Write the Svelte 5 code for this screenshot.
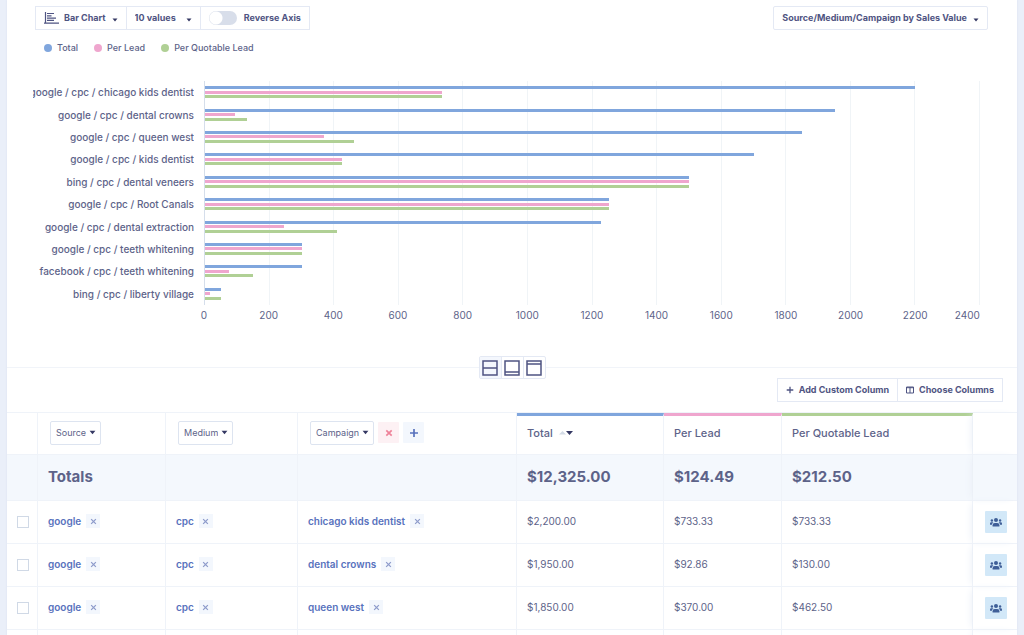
<script lang="ts">
	interface ReportRow {
		source: string;
		medium: string;
		campaign: string;
		total: number;
		perLead: number;
		perQuotable: number;
	}

	const AXIS_MAX = 2400;
	const ticks = Array.from({ length: 13 }, (_, i) => i * 200);
	const dimensions = ['Source', 'Medium', 'Campaign'];

	const series = [
		{ key: 'total', label: 'Total' },
		{ key: 'perLead', label: 'Per Lead' },
		{ key: 'perQuotable', label: 'Per Quotable Lead' }
	] as const;

	const rows: ReportRow[] = [
		{ source: 'google', medium: 'cpc', campaign: 'chicago kids dentist', total: 2200, perLead: 733.33, perQuotable: 733.33 },
		{ source: 'google', medium: 'cpc', campaign: 'dental crowns', total: 1950, perLead: 92.86, perQuotable: 130 },
		{ source: 'google', medium: 'cpc', campaign: 'queen west', total: 1850, perLead: 370, perQuotable: 462.5 },
		{ source: 'google', medium: 'cpc', campaign: 'kids dentist', total: 1700, perLead: 425, perQuotable: 425 },
		{ source: 'bing', medium: 'cpc', campaign: 'dental veneers', total: 1500, perLead: 1500, perQuotable: 1500 },
		{ source: 'google', medium: 'cpc', campaign: 'Root Canals', total: 1250, perLead: 1250, perQuotable: 1250 },
		{ source: 'google', medium: 'cpc', campaign: 'dental extraction', total: 1225, perLead: 245, perQuotable: 408.33 },
		{ source: 'google', medium: 'cpc', campaign: 'teeth whitening', total: 300, perLead: 300, perQuotable: 300 },
		{ source: 'facebook', medium: 'cpc', campaign: 'teeth whitening', total: 300, perLead: 75, perQuotable: 150 },
		{ source: 'bing', medium: 'cpc', campaign: 'liberty village', total: 50, perLead: 16.67, perQuotable: 50 }
	];

	const totals = { total: 12325, perLead: 124.49, perQuotable: 212.5 };

	let reverseAxis = $state(false);
	let layout = $state('split');
	let tableRows = $derived(rows.slice(0, 3));

	function money(value: number): string {
		return value.toLocaleString('en-US', { style: 'currency', currency: 'USD' });
	}
</script>

{#snippet cross()}
	<svg class="cross" viewBox="0 0 8 8" aria-hidden="true"><path d="M1.300 1.300l5.400 5.400M6.700 1.300l-5.400 5.400" /></svg>
{/snippet}

<div class="panel">
	<section class="chart-section">
		<div class="toolbar">
			<div class="control-group">
				<label class="control chart-type">
					<svg class="bar-icon" viewBox="0 0 15 12" aria-hidden="true">
						<path d="M1.5 0v11M0 11.2h15M3 1.5h7M3 3.8h4.500M3 6.100h9M3 8.400h7" />
					</svg>
					<select aria-label="Chart type"><option>Bar Chart</option></select>
				</label>
				<div class="control">
					<select class="values" aria-label="Number of values"><option>10 values</option></select>
				</div>
				<label class="control switch">
					<input type="checkbox" role="switch" bind:checked={reverseAxis} />
					Reverse Axis
				</label>
			</div>
			<div class="control report">
				<select aria-label="Report"><option>Source/Medium/Campaign by Sales Value</option></select>
			</div>
		</div>

		<ul class="legend">
			{#each series as s}
				<li><span class="dot {s.key}"></span>{s.label}</li>
			{/each}
		</ul>

		<!-- Bar chart -->
		<div class="chart">
			<div class="chart-labels">
				{#each rows as row}
					<div class="chart-label"><span>{row.source} / {row.medium} / {row.campaign}</span></div>
				{/each}
			</div>
			<div class="plot" class:reversed={reverseAxis}>
				<div class="gridlines">
					{#each ticks.slice(1) as tick (tick)}<i></i>{/each}
				</div>
				<div class="bar-rows">
					{#each rows as row}
						<div class="bar-row">
							<div class="bars">
								{#each series as s}
									<div class="bar {s.key}" style="width: {(row[s.key] / AXIS_MAX) * 100}%"></div>
								{/each}
							</div>
						</div>
					{/each}
				</div>
			</div>
			<ol class="axis" class:reversed={reverseAxis}>
				{#each ticks as tick}
					<li>{tick}</li>
				{/each}
			</ol>
		</div>
	</section>

	<!-- Layout switch -->
	<div class="divider">
		<div class="view-switch">
			<button class:active={layout === 'split'} aria-label="Split view" onclick={() => (layout = 'split')}>
				<svg viewBox="0 0 16 16"><path d="M1 1h14v14H1zM1 8h14" /></svg>
			</button>
			<button class:active={layout === 'chart'} aria-label="Chart view" onclick={() => (layout = 'chart')}>
				<svg viewBox="0 0 16 16"><path d="M1 1h14v14H1zM1 12h14" /></svg>
			</button>
			<button class:active={layout === 'table'} aria-label="Table view" onclick={() => (layout = 'table')}>
				<svg viewBox="0 0 16 16"><path d="M1 1h14v14H1zM1 4h14" /></svg>
			</button>
		</div>
	</div>

	<div class="table-actions">
		<button>
			<svg viewBox="0 0 8 8" aria-hidden="true"><path d="M4 .7v6.600M.7 4h6.600" /></svg>
			Add Custom Column
		</button>
		<button>
			<svg viewBox="0 0 8 8" aria-hidden="true"><path class="thin" d="M.5 1h7v6h-7zM.5 1.700h7M4 1v6" /></svg>
			Choose Columns
		</button>
	</div>

	<table>
		<colgroup>
			<col class="c-check" /><col class="c-source" /><col class="c-medium" /><col class="c-campaign" />
			<col class="c-total" /><col class="c-lead" /><col class="c-quotable" /><col class="c-action" />
		</colgroup>
		<thead>
			<tr>
				<th></th>
				{#each dimensions as dimension}
					<th class="dimension">
						<div class="cell">
							<select aria-label="{dimension} column" value={dimension}>
								{#each dimensions as option}
									<option>{option}</option>
								{/each}
							</select>
							{#if dimension === 'Campaign'}
								<button class="remove" aria-label="Remove column">{@render cross()}</button>
								<button class="add" aria-label="Add column">
									<svg viewBox="0 0 8 8"><path d="M4 0v8M0 4h8" /></svg>
								</button>
							{/if}
						</div>
					</th>
				{/each}
				{#each series as s}
					<th class="metric {s.key}">
						<div class="cell">
							{s.label}
							{#if s.key === 'total'}
								<svg class="sort" viewBox="0 0 14 6" aria-hidden="true">
									<path class="up" d="M0 4.500L3.500 1 7 4.500z" />
									<path class="down" d="M7 1h7l-3.500 4z" />
								</svg>
							{/if}
						</div>
					</th>
				{/each}
				<th class="pinned"></th>
			</tr>
		</thead>
		<tbody>
			<tr class="totals">
				<td></td>
				<th scope="row">Totals</th>
				<td></td>
				<td></td>
				{#each series as s}
					<td>{money(totals[s.key])}</td>
				{/each}
				<td class="pinned"></td>
			</tr>
			{#each tableRows as row}
				<tr>
					<td class="check"><input type="checkbox" aria-label="Select {row.campaign}" /></td>
					{#each [row.source, row.medium, row.campaign] as value}
						<td>
							<div class="cell">
								<a href="#filter">{value}</a>
								<button class="exclude" aria-label="Exclude {value}">{@render cross()}</button>
							</div>
						</td>
					{/each}
					{#each series as s}
						<td>{money(row[s.key])}</td>
					{/each}
					<td class="pinned">
						<button class="people" aria-label="View leads">
							<svg viewBox="0 0 12 9" aria-hidden="true">
								<circle cx="6" cy="2" r="2" />
								<circle cx="1.900" cy="2.500" r="1.200" />
								<circle cx="10.100" cy="2.500" r="1.200" />
								<path d="M2.600 8.600V7.200Q2.600 4.900 4.800 4.900h2.400Q9.400 4.900 9.400 7.200v1.400z" />
								<path d="M0 6.800V5.600Q0 4.300 1.300 4.300h1.300Q3 4.300 3.300 4.600 2 5.400 2 6.800z" />
								<path d="M12 6.800V5.600Q12 4.300 10.700 4.300H9.400Q9 4.300 8.700 4.600 10 5.400 10 6.800z" />
							</svg>
						</button>
					</td>
				</tr>
			{/each}
			<tr class="next">
				<td></td><td></td><td></td><td></td><td></td><td></td><td></td>
				<td class="pinned"></td>
			</tr>
		</tbody>
	</table>
</div>

<style>
	:global(body) {
		background: #eaeff9;
		color: #5d6389;
		font-family: Inter, "Liberation Sans", sans-serif;
		font-size: 10px;
		line-height: 14px;
	}

	.panel {
		height: 100vh;
		margin: 0 7px;
		background: #fff;
		box-shadow: 0 0 2px #d8dfee;
		overflow: hidden;
	}

	button, select, input { font: inherit; color: inherit; margin: 0; }

	button {
		display: inline-flex;
		align-items: center;
		justify-content: center;
		padding: 0;
		border: none;
		background: none;
		cursor: pointer;
	}

	svg { flex: none; fill: none; stroke: currentColor; }

	select {
		appearance: none;
		field-sizing: content;
		border: none;
		background: url("data:image/svg+xml,%3Csvg xmlns='http://www.w3.org/2000/svg' viewBox='0 0 6 4'%3E%3Cpath fill='%23343863' d='M.5.5h5L3 3.500z'/%3E%3C/svg%3E") no-repeat right 65% / 6px 4px;
		cursor: pointer;
	}

	ul, ol { list-style: none; margin: 0; padding: 0; }

	/* Toolbar */
	.chart-section { padding: 6px 37px 0 28px; }

	.toolbar {
		display: flex;
		justify-content: space-between;
		color: #4f5482;
		font-size: 9px;
		font-weight: 700;
	}

	.control-group { display: flex; }

	.control {
		display: flex;
		align-items: center;
		box-sizing: border-box;
		height: 24px;
		padding: 0 8px;
		border: 1px solid #e4e9f4;
	}

	.control-group .control + .control { border-left: none; }
	.control select { padding: 0 12px 0 0; }
	.control select.values { padding-right: 16px; }
	.chart-type { gap: 5px; }
	.switch { gap: 7px; }
	.report { margin-right: -8px; border-radius: 2px; }

	.bar-icon {
		width: 15px;
		height: 12px;
		stroke-width: 1.2;
	}

	.switch input {
		appearance: none;
		width: 28px;
		height: 14px;
		border-radius: 7px;
		background: radial-gradient(circle at 7px 7px, #fff 6px, #d8deea 7px);
		cursor: pointer;
	}

	.switch input:checked {
		background: radial-gradient(circle at 21px 7px, #fff 6px, #7fa5dd 7px);
	}

	.legend {
		display: flex;
		gap: 16px;
		padding: 11px 0 0 9px;
		font-size: 9px;
		font-weight: 500;
	}

	.legend li {
		display: flex;
		align-items: center;
		gap: 5px;
	}

	.dot {
		width: 8px;
		height: 8px;
		border-radius: 50%;
	}

	.dot.total, .bar.total { background: #80a6dd; }
	.dot.perLead, .bar.perLead { background: #efa6ce; }
	.dot.perQuotable, .bar.perQuotable { background: #b0d095; }

	/* Chart */
	.chart {
		display: grid;
		grid-template-columns: 161px 1fr;
		grid-template-rows: 224px auto;
		column-gap: 10px;
		margin-left: -2px;
		padding-top: 26px;
	}

	.chart-labels, .bar-rows {
		display: grid;
		grid-template-rows: repeat(10, 1fr);
	}

	.chart-label {
		display: flex;
		align-items: center;
		justify-content: flex-end;
		overflow: hidden;
		font-weight: 500;
		white-space: nowrap;
	}

	.plot {
		display: grid;
		border-left: 1px solid #d5deeb;
	}

	.gridlines, .bar-rows { grid-area: 1 / 1; }

	.gridlines {
		display: grid;
		grid-template-columns: repeat(12, 1fr);
	}

	.gridlines i { border-right: 1px solid #f0f4f7; }

	.bar-row { display: flex; align-items: center; }

	.bars {
		display: flex;
		flex: 1;
		flex-direction: column;
		justify-content: space-between;
		height: 12px;
	}

	.bar { height: 3px; }

	.axis {
		grid-column: 2;
		display: flex;
		justify-content: space-between;
		padding-top: 3px;
	}

	.axis li {
		display: flex;
		justify-content: center;
		width: 0;
	}

	.axis li:last-child { justify-content: flex-end; }
	.reversed .bars { align-items: flex-end; }
	.axis.reversed { flex-direction: row-reverse; }

	/* Layout switch */
	.divider {
		display: flex;
		align-items: center;
		justify-content: center;
		margin-bottom: -1px;
		padding-top: 34px;
	}

	.divider::before, .divider::after {
		content: "";
		flex: 1;
		border-top: 1px solid #f1f4f9;
	}

	.view-switch {
		display: flex;
		border: 1px solid #e4e9f4;
		border-radius: 2px;
	}

	.view-switch button {
		width: 21px;
		height: 21px;
		color: #4f5482;
	}

	.view-switch button + button { border-left: 1px solid #e4e9f4; width: 22px; }
	.view-switch button.active { background: #f4f7fd; }

	.view-switch svg {
		width: 16px;
		height: 16px;
		stroke-width: 1.5;
	}

	/* Table actions */
	.table-actions {
		display: flex;
		justify-content: flex-end;
		padding: 0 14px 10px;
	}

	.table-actions button {
		gap: 5px;
		height: 24px;
		padding: 0 8px;
		border: 1px solid #e4e9f4;
		color: #4f5482;
		font-size: 9px;
		font-weight: 700;
	}

	.table-actions button + button { border-left: none; }

	.table-actions svg {
		width: 8px;
		height: 8px;
		stroke-width: 1.3;
	}

	.table-actions .thin { stroke-width: 1; }

	/* Table */
	table {
		width: 100%;
		table-layout: fixed;
		border-collapse: separate;
		border-spacing: 0;
		border-top: 1px solid #eff3f9;
	}

	.c-check { width: 31px; }
	.c-source { width: 128px; }
	.c-medium { width: 132px; }
	.c-campaign { width: 219px; }
	.c-total { width: 147px; }
	.c-lead { width: 118px; }
	.c-quotable { width: 191px; }
	.c-action { width: 44px; }

	th, td {
		box-sizing: border-box;
		height: 43px;
		padding: 0 10px 2px;
		border-right: 1px solid #eff3f9;
		border-bottom: 1px solid #eff3f9;
		text-align: left;
		font-weight: 400;
	}

	thead th { height: 42px; }

	.cell { display: flex; align-items: center; }

	.dimension { padding: 0 12px 2px; }
	.dimension .cell { gap: 4px; }

	.dimension select {
		height: 24px;
		padding: 0 14px 0 5px;
		border: 1px solid #dde4f0;
		border-radius: 2px;
		background-position: right 4px center;
		background-size: 7px 5px;
		font-size: 9px;
	}

	.dimension button {
		width: 21px;
		height: 21px;
		border-radius: 1px;
	}

	.remove { background: #fdf1f4; color: #ee8299; }
	.add { background: #f3f7fd; color: #5872bd; }

	.remove svg, .add svg {
		width: 8px;
		height: 8px;
		stroke-width: 1.7;
	}

	.metric {
		padding: 0 10px 4px;
		border-top: 3px solid;
		font-weight: 500;
	}

	.metric.total { border-top-color: #80a6dd; }
	.metric.perLead { border-top-color: #efa6ce; }
	.metric.perQuotable { border-top-color: #b0d095; }
	.metric .cell { gap: 6px; font-size: 11px; }

	.sort { width: 14px; height: 6px; stroke: none; }
	.sort .up { fill: #d3dbe6; }
	.sort .down { fill: #343863; }

	.totals th, .totals td {
		height: 46px;
		background: #f4f8fd;
		font-size: 15px;
		font-weight: 700;
	}

	.check { padding: 0 0 0 10px; }

	.check input {
		display: block;
		appearance: none;
		width: 12px;
		height: 12px;
		border: 1px solid #d0d9e6;
		background: #fff;
	}

	.check input:checked { background: #80a6dd; }

	a {
		color: #5872bd;
		font-weight: 600;
		text-decoration: none;
	}

	.exclude {
		width: 14px;
		height: 14px;
		margin-left: 5px;
		background: #f3f7fd;
		color: #8d9bcb;
	}

	.exclude svg { width: 7px; height: 7px; stroke-width: 1.4; }

	.pinned {
		padding: 0 0 0 12px;
		border-right: none;
		box-shadow: -4px 0 8px -3px #e9eef6;
	}

	.people {
		display: flex;
		width: 22px;
		height: 22px;
		border-radius: 1px;
		background: #d2e8f8;
		color: #3f5f98;
	}

	.people svg {
		width: 12px;
		height: 9px;
		fill: currentColor;
		stroke: none;
	}
</style>
